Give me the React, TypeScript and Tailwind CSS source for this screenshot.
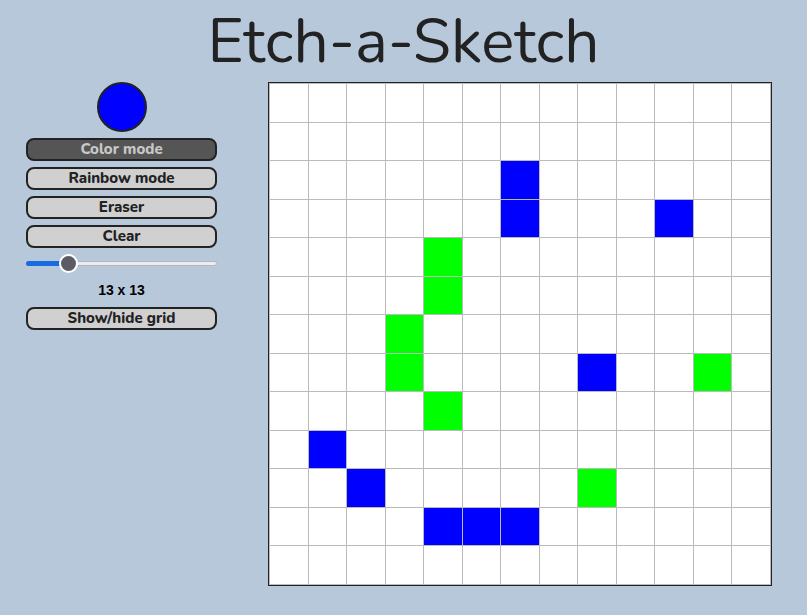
import React from "react";

const BLUE = new Set(["2-6", "3-6", "3-10", "7-8", "9-1", "10-2", "11-4", "11-5", "11-6"]);
const GREEN = new Set(["4-4", "5-4", "6-3", "7-3", "7-11", "8-4", "10-8"]);

function Btn({ children, active }: { children: React.ReactNode; active?: boolean }) {
  return (
    <button
      className={
        active
          ? "h-[23px] w-full rounded-[8px] border-2 border-[#222] bg-[#555] text-[15px] font-extrabold leading-none text-[#c8c8c8]"
          : "h-[23px] w-full rounded-[8px] border-2 border-[#222] bg-[#d0d0d0] text-[15px] font-extrabold leading-none text-[#222]"
      }
      style={{ fontFamily: "Nunito, Lato, 'Open Sans', sans-serif" }}
    >
      {children}
    </button>
  );
}

export default function App() {
  const cells = [];
  for (let r = 0; r < 13; r++) {
    for (let c = 0; c < 13; c++) {
      const k = `${r}-${c}`;
      const bg = BLUE.has(k) ? "bg-[#0000ff]" : GREEN.has(k) ? "bg-[#00ff00]" : "bg-white";
      cells.push(<div key={k} className={bg} />);
    }
  }
  return (
    <div className="min-h-screen w-full bg-[#b6c8da]" style={{ fontFamily: "Nunito, Lato, sans-serif" }}>
      <h1
        className="pt-[6px] text-center text-[62px] font-normal leading-[72px] text-[#222]"
        style={{ fontFamily: "Nunito, Lato, 'Open Sans', sans-serif" }}
      >
        Etch-a-Sketch
      </h1>
      <div className="mt-[4px] flex items-start pl-[26px]">
        <div className="flex w-[191px] flex-col items-center">
          <div className="h-[50px] w-[50px] rounded-full border-2 border-[#222] bg-[#0000ff]" />
          <div className="mt-[6px] flex w-full flex-col gap-[6px]">
            <Btn active>Color mode</Btn>
            <Btn>Rainbow mode</Btn>
            <Btn>Eraser</Btn>
            <Btn>Clear</Btn>
          </div>
          <div className="relative mt-[6px] h-[18px] w-full">
            <div className="absolute left-0 right-0 top-[6.5px] h-[5px] rounded-full border border-[#b5b5bd] bg-[#ececef]" />
            <div className="absolute left-0 top-[6.5px] h-[5px] w-[44px] rounded-full bg-[#1a6ae0]" />
            <div className="absolute left-[33px] top-0 h-[19px] w-[19px] rounded-full border-2 border-white bg-[#5b5b66]" />
          </div>
          <div
            className="mt-[10px] text-[14px] font-bold leading-[16px] text-black"
            style={{ fontFamily: "'Liberation Sans', Arial, sans-serif" }}
          >
            13 x 13
          </div>
          <div className="mt-[8px] w-full">
            <Btn>Show/hide grid</Btn>
          </div>
        </div>
        <div className="ml-[51px] border border-[#222]">
          <div className="border border-[#bbb] bg-[#bbb] p-0">
            <div className="grid h-[500px] w-[500px] grid-cols-[repeat(13,1fr)] grid-rows-[repeat(13,1fr)] gap-[1px] bg-[#bbb]">
              {cells}
            </div>
          </div>
        </div>
      </div>
    </div>
  );
}
